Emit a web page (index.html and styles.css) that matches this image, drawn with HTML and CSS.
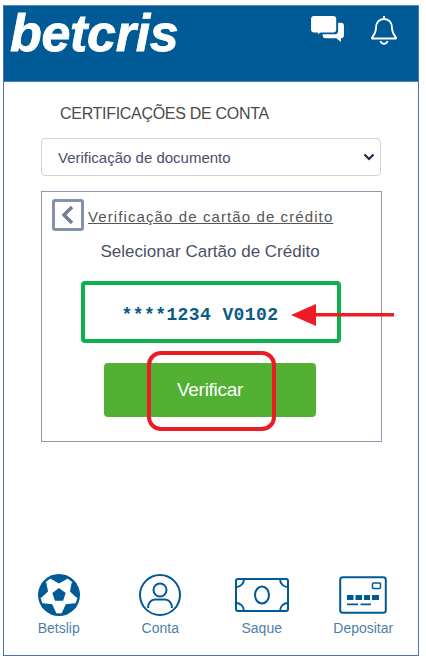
FILE: index.html
```html
<!DOCTYPE html>
<html lang="pt">
<head>
  <meta charset="UTF-8" />
  <meta name="viewport" content="width=device-width, initial-scale=1.0" />
  <title>Betcris</title>
  <link rel="stylesheet" href="styles.css">
</head>
<body>
  <div class="frame">
    <header class="topbar">
      <div class="logo">betcris</div>
      <div class="top-icons">
        <svg class="icon-chat" viewBox="0 0 34 30">
          <path fill="#fff" d="M3 1h20a3 3 0 0 1 3 3v11a3 3 0 0 1-3 3H10l-3 2v-2H3a3 3 0 0 1-3-3V4a3 3 0 0 1 3-3z"/>
          <path fill="#fff" d="M28 8h3a3 3 0 0 1 3 3v10a3 3 0 0 1-3 3v4l-5-4H15a3 3 0 0 1-3-3v-1h12a4 4 0 0 0 4-4z"/>
        </svg>
        <svg class="icon-bell" viewBox="0 0 26 30">
          <path fill="none" stroke="#fff" stroke-width="1.8" stroke-linejoin="round" d="M13 4c-5 0-8 3.500-8 9 0 5-2 7-4 9.500v1h24v-1c-2-2.500-4-4.500-4-9.500 0-5.500-3-9-8-9z"/>
          <path fill="none" stroke="#fff" stroke-width="1.8" d="M13 1v3M9.500 26c.5 2 2 2.800 3.500 2.800s3-.8 3.500-2.800"/>
        </svg>
      </div>
    </header>

    <main class="content">
      <h1 class="page-title">CERTIFICAÇÕES DE CONTA</h1>
      <div class="fake-select">
        <span>Verificação de documento</span>
        <svg viewBox="0 0 12 8"><path fill="none" stroke="#1f2a44" stroke-width="2.200" d="M1.500 1.500 6 6l4.500-4.500"/></svg>
      </div>

      <section class="card">
        <div class="card-head">
          <span class="back-btn">
            <svg viewBox="0 0 14 20"><path fill="none" stroke="#6f7f95" stroke-width="3.500" d="M11 2 3 10l8 8"/></svg>
          </span>
          <a class="card-link">Verificação de cartão de crédito</a>
        </div>
        <p class="card-sub">Selecionar Cartão de Crédito</p>
        <div class="card-number">****1234 V0102</div>
        <button class="verify">Verificar</button>
      </section>
    </main>

    <nav class="bottom-nav">
      <div class="nav-item">
        <svg viewBox="0 0 42 42">
          <circle cx="21" cy="21" r="21" fill="#005a96"/>
          <circle cx="21" cy="21" r="18.500" fill="#fff"/>
          <path fill="#005a96" d="M14 1h14l1 4-8 4.500L13 5z"/>
          <path fill="#005a96" d="M14 1h14l1 4-8 4.500L13 5z" transform="rotate(72 21 21)"/>
          <path fill="#005a96" d="M14 1h14l1 4-8 4.500L13 5z" transform="rotate(144 21 21)"/>
          <path fill="#005a96" d="M14 1h14l1 4-8 4.500L13 5z" transform="rotate(216 21 21)"/>
          <path fill="#005a96" d="M14 1h14l1 4-8 4.500L13 5z" transform="rotate(288 21 21)"/>
          <path fill="#005a96" d="M21 14l6.700 4.900-2.600 7.800h-8.200l-2.600-7.800z"/>
        </svg>
        <span>Betslip</span>
      </div>
      <div class="nav-item">
        <svg viewBox="0 0 42 42" fill="none" stroke="#005a96" stroke-width="2">
          <circle cx="21" cy="21" r="20"/>
          <circle cx="21" cy="16" r="6.500"/>
          <path d="M9 34c0-5 3-8.500 7-8.500h10c4 0 7 3.500 7 8.500"/>
        </svg>
        <span>Conta</span>
      </div>
      <div class="nav-item">
        <svg class="wide" viewBox="0 0 54 34" fill="none" stroke="#005a96" stroke-width="2">
          <rect x="1" y="1" width="52" height="32" rx="2"/>
          <ellipse cx="27" cy="17" rx="7" ry="8.500"/>
          <path d="M1 9c4 0 8-3 8-8M53 9c-4 0-8-3-8-8M1 25c4 0 8 3 8 8M53 25c-4 0-8 3-8 8"/>
        </svg>
        <span>Saque</span>
      </div>
      <div class="nav-item">
        <svg class="card-icon" viewBox="0 0 48 38">
          <rect x="1.200" y="1.200" width="45.600" height="35.600" rx="2.500" fill="none" stroke="#005a96" stroke-width="2"/>
          <rect x="33.500" y="7" width="8" height="5.500" rx="1" fill="none" stroke="#005a96" stroke-width="1.500"/>
          <path fill="#005a96" d="M8 19h6.500v5H8zM16.500 19H23v5h-6.500zM25 19h6v5h-6zM33 19h7v5h-7zM8 27.500h11v1.800H8zM21.500 27.500H32v1.800H21.500z"/>
        </svg>
        <span>Depositar</span>
      </div>
    </nav>

    <!-- annotations drawn over the screenshot -->
    <div class="mark-red"></div>
    <svg class="mark-arrow" viewBox="0 0 104 24">
      <path fill="#ed1c24" d="M0 12 25 1v9h78v3.500H25V23z"/>
    </svg>
  </div>
</body>
</html>
```

FILE: styles.css
```css
html, body {
  margin: 0;
  background: #fff;
}

body {
  font-family: "Liberation Sans", Arial, sans-serif;
  color: #444;
}

.frame {
  position: relative;
  box-sizing: border-box;
  display: flex;
  flex-direction: column;
  width: 416px;
  height: 651px;
  margin: 5px 0 0 3px;
  border: 1px solid #4a72c4;
  border-top-color: #5d86cc;
}

/* Header */
.topbar {
  display: flex;
  justify-content: space-between;
  height: 75px;
  padding: 0 21px 0 6px;
  background: #005a96;
  border-bottom: 1px solid #4a7fb0;
}

.logo {
  color: #fff;
  font-size: 52px;
  font-weight: bold;
  font-style: italic;
  line-height: 54px;
  letter-spacing: -.3px;
  -webkit-text-stroke: .8px #fff;
}

.top-icons {
  display: flex;
  align-items: flex-start;
  gap: 27px;
  padding-top: 9px;
}

.icon-chat {
  width: 33px;
  height: 29px;
}

.icon-bell {
  width: 26px;
  height: 30px;
}

/* Content */
.content {
  flex: 1;
  padding: 22px 37px 0;
}

.page-title {
  margin: 0 0 14px 19px;
  font-size: 16px;
  font-weight: normal;
  line-height: 20px;
  letter-spacing: -.3px;
  color: #4a4a4a;
}

.fake-select {
  display: flex;
  justify-content: space-between;
  align-items: center;
  box-sizing: border-box;
  width: 340px;
  height: 38px;
  padding: 0 5px 0 16px;
  background: #fff;
  border: 1px solid #ced4da;
  border-radius: 4px;
  font-size: 15px;
  color: #49506a;
}

.fake-select svg {
  width: 12px;
  height: 8px;
}

.card {
  box-sizing: border-box;
  width: 341px;
  height: 251px;
  margin-top: 15px;
  padding: 7px 24px 0 10px;
  border: 1px solid #8d99ad;
}

.card-head {
  display: flex;
  align-items: center;
  gap: 4px;
}

.back-btn {
  display: flex;
  justify-content: center;
  align-items: center;
  box-sizing: border-box;
  width: 32px;
  height: 32px;
  border: 3px solid #8392a8;
  border-radius: 3px;
}

.back-btn svg {
  width: 14px;
  height: 20px;
}

.card-link {
  padding-top: 2px;
  font-size: 15px;
  letter-spacing: 1.100px;
  color: #555;
  text-decoration: underline;
}

.card-sub {
  margin: 11px 0 0 11px;
  font-size: 17px;
  line-height: 20px;
  text-align: center;
  color: #4a5068;
}

.card-number {
  box-sizing: border-box;
  width: 260px;
  height: 62px;
  margin: 19px 0 0 29px;
  padding: 16px 22px 0 0;
  border: 4px solid #0db14b;
  border-radius: 4px;
  font-family: "Liberation Mono", monospace;
  font-size: 18px;
  font-weight: bold;
  line-height: 28px;
  letter-spacing: .4px;
  text-align: center;
  color: #0b5a85;
}

.verify {
  display: block;
  width: 212px;
  height: 54px;
  margin: 20px 0 0 52px;
  border: 0;
  border-radius: 4px;
  background: #52b033;
  color: #fff;
  font-family: inherit;
  font-size: 19px;
  letter-spacing: -.3px;
}

/* Bottom nav */
.bottom-nav {
  display: grid;
  grid-template-columns: repeat(4, 101.500px);
  box-sizing: border-box;
  height: 83px;
  padding: 2px 0 0 4px;
}

.nav-item {
  display: flex;
  flex-direction: column;
  align-items: center;
  font-size: 14px;
  line-height: 16px;
  color: #4f7fa8;
}

.nav-item svg {
  width: 42px;
  height: 42px;
  margin-bottom: 4px;
}

.nav-item svg.wide {
  width: 54px;
}

.nav-item svg.card-icon {
  width: 48px;
}

/* Annotations */
.mark-red {
  position: absolute;
  left: 143px;
  top: 345px;
  box-sizing: border-box;
  width: 129px;
  height: 80px;
  border: 4px solid #ed1c24;
  border-radius: 14px;
}

.mark-arrow {
  position: absolute;
  left: 287px;
  top: 297px;
  width: 104px;
  height: 24px;
}
```
